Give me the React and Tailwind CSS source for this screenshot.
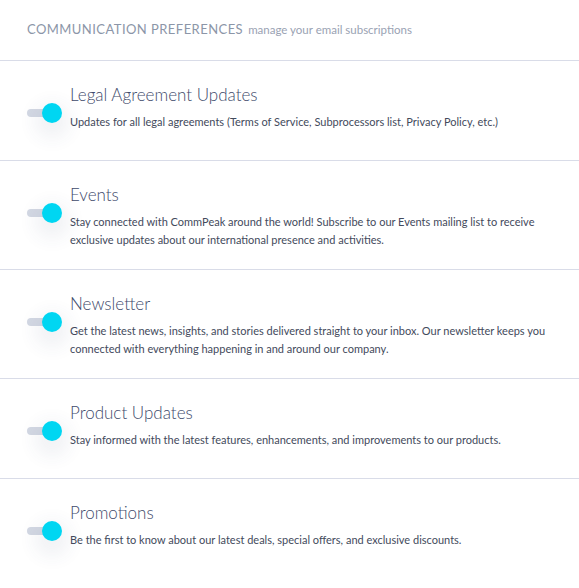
import { useState } from 'react';

const items = [
  {
    title: 'Legal Agreement Updates',
    desc: 'Updates for all legal agreements (Terms of Service, Subprocessors list, Privacy Policy, etc.)',
  },
  {
    title: 'Events',
    desc: 'Stay connected with CommPeak around the world! Subscribe to our Events mailing list to receive exclusive updates about our international presence and activities.',
  },
  {
    title: 'Newsletter',
    desc: 'Get the latest news, insights, and stories delivered straight to your inbox. Our newsletter keeps you connected with everything happening in and around our company.',
  },
  {
    title: 'Product Updates',
    desc: 'Stay informed with the latest features, enhancements, and improvements to our products.',
  },
  {
    title: 'Promotions',
    desc: 'Be the first to know about our latest deals, special offers, and exclusive discounts.',
  },
];

function Toggle({ on, onClick }) {
  return (
    <button onClick={onClick} className="relative w-[36px] h-[22px] shrink-0 mt-[18px] focus:outline-none">
      <span className="absolute left-0 top-[7px] w-[30px] h-[8px] rounded-full bg-[#d3d8e3]"></span>
      <span
        className={`absolute top-[1px] w-[20px] h-[20px] rounded-full bg-[#00d6f2] shadow-[0_8px_18px_8px_rgba(60,70,110,0.07)] ${
          on ? 'left-[15px]' : 'left-0'
        }`}
      ></span>
    </button>
  );
}

export default function App() {
  const [enabled, setEnabled] = useState(items.map(() => true));

  const flip = (i) => {
    setEnabled(enabled.map((v, idx) => (idx === i ? !v : v)));
  };

  return (
    <div className="bg-white w-[579px] min-h-[588px]" style={{ fontFamily: 'Lato, "Open Sans", sans-serif' }}>
      <div className="h-[61px] flex items-center pl-[27px] border-b border-[#d9dce8]">
        <span className="text-[13px] tracking-[0.45px] text-[#8c96a8]">COMMUNICATION PREFERENCES</span>
        <span className="text-[11.5px] text-[#9aa2b3] ml-[5px]">manage your email subscriptions</span>
      </div>
      {items.map((item, i) => (
        <div
          key={item.title}
          className={`flex items-start min-h-[100px] pl-[27px] pr-[20px] pt-[23px] pb-[20px] ${
            i < items.length - 1 ? 'border-b border-[#d9dce8]' : ''
          }`}
        >
          <Toggle on={enabled[i]} onClick={() => flip(i)} />
          <div className="ml-[7px]">
            <h3 className="text-[17px] font-light leading-[22px] text-[#3e4a6b]">{item.title}</h3>
            <p className="mt-[7px] text-[11px] leading-[18px] text-[#434a5c]">{item.desc}</p>
          </div>
        </div>
      ))}
    </div>
  );
}
